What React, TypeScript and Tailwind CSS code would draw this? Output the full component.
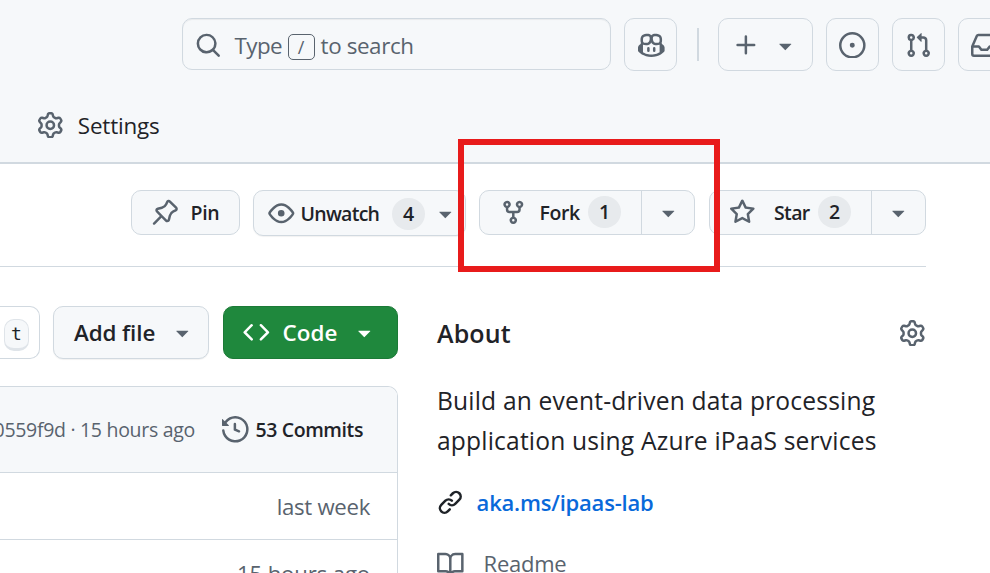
import type { ReactNode } from "react";

const icons = {
  search: "M10.68 11.74a6 6 0 0 1-7.922-8.982 6 6 0 0 1 8.982 7.922l3.04 3.04a.749.749 0 0 1-.326 1.275.749.749 0 0 1-.734-.215ZM11.5 7a4.499 4.499 0 1 0-8.997 0A4.499 4.499 0 0 0 11.5 7Z",
  copilot: "M7.998 15.035c-4.562 0-7.873-2.914-7.998-3.749V9.338c.085-.628.677-1.686 1.588-2.065.013-.07.024-.143.036-.218.029-.183.06-.384.126-.612-.201-.508-.254-1.084-.254-1.656 0-.87.128-1.769.693-2.484.579-.733 1.494-1.124 2.724-1.261 1.206-.134 2.262.034 2.944.765.05.053.096.108.139.165.044-.057.094-.112.143-.165.682-.731 1.738-.899 2.944-.765 1.23.137 2.145.528 2.724 1.261.566.715.693 1.614.693 2.484 0 .572-.053 1.148-.254 1.656.066.228.098.429.126.612.012.076.024.148.037.218.924.385 1.522 1.471 1.591 2.095v1.872c0 .766-3.351 3.795-8.002 3.795Zm0-1.485c2.28 0 4.584-1.11 5.002-1.433V7.862l-.023-.116c-.49.21-1.075.291-1.727.291-1.146 0-2.059-.327-2.71-.991A3.222 3.222 0 0 1 8 6.303a3.24 3.24 0 0 1-.544.743c-.65.664-1.563.991-2.71.991-.652 0-1.236-.081-1.727-.291l-.023.116v4.255c.419.323 2.722 1.433 5.002 1.433ZM6.762 2.83c-.193-.206-.637-.413-1.682-.297-1.019.113-1.479.404-1.713.7-.247.312-.369.789-.369 1.554 0 .793.129 1.171.308 1.371.162.181.519.379 1.442.379.853 0 1.339-.235 1.638-.54.315-.322.527-.827.617-1.553.117-.935-.037-1.395-.241-1.614Zm4.155-.297c-1.044-.116-1.488.091-1.681.297-.204.219-.359.679-.242 1.614.091.726.303 1.231.618 1.553.299.305.784.54 1.638.54.922 0 1.28-.198 1.442-.379.179-.2.308-.578.308-1.371 0-.765-.123-1.242-.37-1.554-.233-.296-.693-.587-1.713-.7ZM6.25 9.037a.75.75 0 0 1 .75.75v1.501a.75.75 0 0 1-1.5 0V9.787a.75.75 0 0 1 .75-.75Zm4.25.75v1.501a.75.75 0 0 1-1.5 0V9.787a.75.75 0 0 1 1.5 0Z",
  plus: "M7.75 2a.75.75 0 0 1 .75.75V7h4.25a.75.75 0 0 1 0 1.5H8.5v4.25a.75.75 0 0 1-1.5 0V8.5H2.75a.75.75 0 0 1 0-1.5H7V2.75A.75.75 0 0 1 7.75 2Z",
  caret: "m4.427 7.427 3.396 3.396a.25.25 0 0 0 .354 0l3.396-3.396A.25.25 0 0 0 11.396 7H4.604a.25.25 0 0 0-.177.427Z",
  issue: "M8 9.5a1.5 1.5 0 1 0 0-3 1.5 1.5 0 0 0 0 3ZM8 0a8 8 0 1 1 0 16A8 8 0 0 1 8 0ZM1.5 8a6.5 6.5 0 1 0 13 0 6.5 6.5 0 0 0-13 0Z",
  pull: "M1.5 3.25a2.25 2.25 0 1 1 3 2.122v5.256a2.251 2.251 0 1 1-1.5 0V5.372A2.25 2.25 0 0 1 1.5 3.25Zm5.677-.177L9.573.677A.25.25 0 0 1 10 .854V2.5h1A2.5 2.5 0 0 1 13.5 5v5.628a2.251 2.251 0 1 1-1.5 0V5a1 1 0 0 0-1-1h-1v1.646a.25.25 0 0 1-.427.177L7.177 3.427a.25.25 0 0 1 0-.354ZM3.75 2.5a.75.75 0 1 0 0 1.5.75.75 0 0 0 0-1.5Zm0 9.5a.75.75 0 1 0 0 1.5.75.75 0 0 0 0-1.5Zm8.25.75a.75.75 0 1 0 1.5 0 .75.75 0 0 0-1.5 0Z",
  inbox: "M2.8 2.06A1.75 1.75 0 0 1 4.41 1h7.18c.7 0 1.333.417 1.61 1.06l2.74 6.395c.04.093.06.194.06.295v4.5A1.75 1.75 0 0 1 14.25 15H1.75A1.75 1.75 0 0 1 0 13.25v-4.5c0-.101.02-.202.06-.295Zm1.61.44a.25.25 0 0 0-.23.152L1.887 8H4.75a.75.75 0 0 1 .6.3L6.625 10h2.75l1.275-1.7a.75.75 0 0 1 .6-.3h2.863L11.82 2.652a.25.25 0 0 0-.23-.152Zm10.09 7h-2.875l-1.275 1.7a.75.75 0 0 1-.6.3h-3.5a.75.75 0 0 1-.6-.3L4.375 9.5H1.5v3.75c0 .138.112.25.25.25h12.5a.25.25 0 0 0 .25-.25Z",
  gear: "M8 0a8.2 8.2 0 0 1 .701.031C9.444.095 9.99.645 10.16 1.29l.288 1.107c.018.066.079.158.212.224.231.114.454.243.668.386.123.082.233.09.299.071l1.103-.303c.644-.176 1.392.021 1.82.63.27.385.506.792.704 1.218.315.675.111 1.422-.364 1.891l-.814.806c-.049.048-.098.147-.088.294.016.257.016.515 0 .772-.01.147.038.246.088.294l.814.806c.475.469.679 1.216.364 1.891a7.977 7.977 0 0 1-.704 1.217c-.428.61-1.176.807-1.82.63l-1.102-.302c-.067-.019-.177-.011-.3.071a5.909 5.909 0 0 1-.668.386c-.133.066-.194.158-.211.224l-.29 1.106c-.168.646-.715 1.196-1.458 1.26a8.006 8.006 0 0 1-1.402 0c-.743-.064-1.289-.614-1.458-1.26l-.289-1.106c-.018-.066-.079-.158-.212-.224a5.738 5.738 0 0 1-.668-.386c-.123-.082-.233-.09-.299-.071l-1.103.303c-.644.176-1.392-.021-1.82-.63a8.12 8.12 0 0 1-.704-1.218c-.315-.675-.111-1.422.363-1.891l.815-.806c.05-.048.098-.147.088-.294a6.214 6.214 0 0 1 0-.772c.01-.147-.038-.246-.088-.294l-.815-.806C.635 6.045.431 5.298.746 4.623a7.92 7.92 0 0 1 .704-1.217c.428-.61 1.176-.807 1.82-.63l1.102.302c.067.019.177.011.3-.071.214-.143.437-.272.668-.386.133-.066.194-.158.211-.224l.29-1.106C6.009.645 6.556.095 7.299.03 7.53.01 7.764 0 8 0Zm-.571 1.525c-.036.003-.108.036-.137.146l-.289 1.105c-.147.561-.549.967-.998 1.189-.173.086-.34.183-.5.29-.417.278-.97.423-1.529.27l-1.103-.303c-.109-.03-.175.016-.195.045-.22.312-.412.644-.573.99-.014.031-.021.11.059.19l.815.806c.411.406.562.957.53 1.456a4.709 4.709 0 0 0 0 .582c.032.499-.119 1.05-.53 1.456l-.815.806c-.081.08-.073.159-.059.19.162.346.353.677.573.989.02.03.085.076.195.046l1.102-.303c.56-.153 1.113-.008 1.53.27.161.107.328.204.501.29.447.222.85.629.997 1.189l.289 1.105c.029.109.101.143.137.146a6.6 6.6 0 0 0 1.142 0c.036-.003.108-.036.137-.146l.289-1.105c.147-.561.549-.967.998-1.189.173-.086.34-.183.5-.29.417-.278.97-.423 1.529-.27l1.103.303c.109.029.175-.016.195-.045.22-.313.411-.644.573-.99.014-.031.021-.11-.059-.19l-.815-.806c-.411-.406-.562-.957-.53-1.456a4.709 4.709 0 0 0 0-.582c-.032-.499.119-1.05.53-1.456l.815-.806c.081-.08.073-.159.059-.19a6.464 6.464 0 0 0-.573-.989c-.02-.03-.085-.076-.195-.046l-1.102.303c-.56.153-1.113.008-1.53-.27a4.44 4.44 0 0 0-.501-.29c-.447-.222-.85-.629-.997-1.189l-.289-1.105c-.029-.11-.101-.143-.137-.146a6.6 6.6 0 0 0-1.142 0ZM11 8a3 3 0 1 1-6 0 3 3 0 0 1 6 0ZM9.5 8a1.5 1.5 0 1 0-3.001.001A1.5 1.5 0 0 0 9.5 8Z",
  pin: "m11.294.984 3.722 3.722a1.75 1.75 0 0 1-.504 2.826l-1.327.613a3.089 3.089 0 0 0-1.707 2.084l-.584 2.454c-.317 1.332-1.972 1.8-2.94.832L5.75 11.311 1.78 15.28a.749.749 0 1 1-1.06-1.06l3.969-3.97-2.204-2.204c-.968-.968-.5-2.623.832-2.94l2.454-.584a3.08 3.08 0 0 0 2.084-1.707l.613-1.327a1.75 1.75 0 0 1 2.826-.504ZM6.283 9.723l2.732 2.731a.25.25 0 0 0 .42-.119l.584-2.454a4.586 4.586 0 0 1 2.537-3.098l1.328-.613a.25.25 0 0 0 .072-.404l-3.722-3.722a.25.25 0 0 0-.404.072l-.613 1.328a4.584 4.584 0 0 1-3.098 2.537l-2.454.584a.25.25 0 0 0-.119.42l2.731 2.732Z",
  eye: "M8 2c1.981 0 3.671.992 4.933 2.078 1.27 1.091 2.187 2.345 2.637 3.023a1.62 1.62 0 0 1 0 1.798c-.45.678-1.367 1.932-2.637 3.023C11.67 13.008 9.981 14 8 14c-1.981 0-3.671-.992-4.933-2.078C1.797 10.83.88 9.576.43 8.898a1.62 1.62 0 0 1 0-1.798c.45-.677 1.367-1.931 2.637-3.022C4.33 2.992 6.019 2 8 2ZM1.679 7.932a.12.12 0 0 0 0 .136c.411.622 1.241 1.75 2.366 2.717C5.176 11.758 6.527 12.5 8 12.5c1.473 0 2.825-.742 3.955-1.715 1.124-.967 1.954-2.096 2.366-2.717a.12.12 0 0 0 0-.136c-.412-.621-1.242-1.75-2.366-2.717C10.824 4.242 9.473 3.5 8 3.5c-1.473 0-2.825.742-3.955 1.715-1.124.967-1.954 2.096-2.366 2.717ZM8 10a2 2 0 1 1-.001-3.999A2 2 0 0 1 8 10Z",
  fork: "M5 5.372v.878c0 .414.336.75.75.75h4.5a.75.75 0 0 0 .75-.75v-.878a2.25 2.25 0 1 1 1.5 0v.878a2.25 2.25 0 0 1-2.25 2.25h-1.5v2.128a2.251 2.251 0 1 1-1.5 0V8.5h-1.5A2.25 2.25 0 0 1 3.5 6.25v-.878a2.25 2.25 0 1 1 1.5 0ZM5 3.25a.75.75 0 1 0-1.5 0 .75.75 0 0 0 1.5 0Zm6.75.75a.75.75 0 1 0 0-1.5.75.75 0 0 0 0 1.5Zm-3 8.75a.75.75 0 1 0-1.5 0 .75.75 0 0 0 1.5 0Z",
  star: "M8 .25a.75.75 0 0 1 .673.418l1.882 3.815 4.21.612a.75.75 0 0 1 .416 1.279l-3.046 2.97.719 4.192a.751.751 0 0 1-1.088.791L8 12.347l-3.766 1.98a.75.75 0 0 1-1.088-.79l.72-4.194L.818 6.374a.75.75 0 0 1 .416-1.28l4.21-.611L7.327.668A.75.75 0 0 1 8 .25Zm0 2.445L6.615 5.5a.75.75 0 0 1-.564.41l-3.097.45 2.24 2.184a.75.75 0 0 1 .216.664l-.528 3.084 2.769-1.456a.75.75 0 0 1 .698 0l2.77 1.456-.53-3.084a.75.75 0 0 1 .216-.664l2.24-2.183-3.096-.45a.75.75 0 0 1-.564-.41L8 2.694Z",
  code: "m11.28 3.22 4.25 4.25a.75.75 0 0 1 0 1.06l-4.25 4.25a.749.749 0 0 1-1.275-.326.749.749 0 0 1 .215-.734L13.94 8l-3.72-3.72a.749.749 0 0 1 .326-1.275.749.749 0 0 1 .734.215Zm-6.56 0a.751.751 0 0 1 1.042.018.751.751 0 0 1 .018 1.042L2.06 8l3.72 3.72a.749.749 0 0 1-.326 1.275.749.749 0 0 1-.734-.215L.47 8.53a.75.75 0 0 1 0-1.06Z",
  history: "m.427 1.927 1.215 1.215a8.002 8.002 0 1 1-1.6 5.685.75.75 0 1 1 1.493-.154 6.5 6.5 0 1 0 1.18-4.458l1.358 1.358A.25.25 0 0 1 3.896 6H.25A.25.25 0 0 1 0 5.75V2.104a.25.25 0 0 1 .427-.177ZM7.75 4a.75.75 0 0 1 .75.75v2.992l2.028.812a.75.75 0 0 1-.557 1.392l-2.5-1A.751.751 0 0 1 7 8.25v-3.5A.75.75 0 0 1 7.75 4Z",
  link: "m7.775 3.275 1.25-1.25a3.5 3.5 0 1 1 4.95 4.95l-2.5 2.5a3.5 3.5 0 0 1-4.95 0 .751.751 0 0 1 .018-1.042.751.751 0 0 1 1.042-.018 1.998 1.998 0 0 0 2.83 0l2.5-2.5a2.002 2.002 0 0 0-2.83-2.83l-1.25 1.25a.751.751 0 0 1-1.042-.018.751.751 0 0 1-.018-1.042Zm-4.69 9.64a1.998 1.998 0 0 0 2.83 0l1.25-1.25a.751.751 0 0 1 1.042.018.751.751 0 0 1 .018 1.042l-1.25 1.25a3.5 3.5 0 1 1-4.95-4.95l2.5-2.5a3.5 3.5 0 0 1 4.95 0 .751.751 0 0 1-.018 1.042.751.751 0 0 1-1.042.018 1.998 1.998 0 0 0-2.83 0l-2.5 2.5a1.998 1.998 0 0 0 0 2.83Z",
  book: "M0 1.75A.75.75 0 0 1 .75 1h4.253c1.227 0 2.317.59 3 1.501A3.743 3.743 0 0 1 11.006 1h4.245a.75.75 0 0 1 .75.75v10.5a.75.75 0 0 1-.75.75h-4.507a2.25 2.25 0 0 0-1.591.659l-.622.621a.75.75 0 0 1-1.06 0l-.622-.621A2.25 2.25 0 0 0 5.258 13H.75a.75.75 0 0 1-.75-.75Zm7.251 10.324.004-5.073-.002-2.253A2.25 2.25 0 0 0 5.003 2.5H1.5v9h3.757a3.75 3.75 0 0 1 1.994.574ZM8.755 4.75l-.004 7.322a3.752 3.752 0 0 1 1.992-.572H14.5v-9h-3.495a2.25 2.25 0 0 0-2.25 2.25Z",
};

function Icon({ name, className = "" }: { name: keyof typeof icons; className?: string }) {
  return (
    <svg viewBox="0 0 16 16" fill="currentColor" className={`size-[26.6px] shrink-0 ${className}`}>
      <path d={icons[name]} />
    </svg>
  );
}

function HeaderButton({ className = "", children }: { className?: string; children: ReactNode }) {
  return (
    <button className={`flex h-[53px] shrink-0 items-center rounded-[10px] border border-[#d1d9e0] pt-px ${className}`}>
      {children}
    </button>
  );
}

function Counter({ className = "", children }: { className?: string; children: ReactNode }) {
  return (
    <span className={`flex h-8 w-[33px] shrink-0 items-center justify-center rounded-full bg-[#e7eaed] text-[19.5px] leading-none ${className}`}>
      {children}
    </span>
  );
}

type SplitButtonProps = {
  icon: "fork" | "star";
  label: string;
  count: number;
  className: string;
  mainClass: string;
  labelClass: string;
  menuClass: string;
};

function SplitButton({ icon, label, count, className, mainClass, labelClass, menuClass }: SplitButtonProps) {
  return (
    <div className={`flex h-[45px] shrink-0 rounded-[10px] border border-[#d1d9e0] bg-[#f6f8fa] ${className}`}>
      <button className={`flex flex-1 items-start border-r border-[#d1d9e0] ${mainClass}`}>
        <Icon name={icon} className="mt-2 text-[#59636e]" />
        <span className={`mt-[11px] shrink-0 text-left leading-[22px] ${labelClass}`}>{label}</span>
        <Counter className="mt-[5px]">{count}</Counter>
      </button>
      <button className={`flex items-start pl-[13px] ${menuClass}`}>
        <Icon name="caret" className="mt-2 text-[#59636e]" />
      </button>
    </div>
  );
}

export default function App() {
  return (
    <div className="relative h-[573px] w-[990px] overflow-hidden bg-white font-['Open_Sans','Noto_Sans',sans-serif] text-[#1f2328]">
      <header className="h-[164px] border-b-2 border-[#d1d9e0] bg-[#f6f8fa]">
        <div className="flex pt-[18px] pl-[182px] text-[#59636e]">
          <div className="flex h-[52px] w-[429px] shrink-0 items-center rounded-[10px] border border-[#d1d9e0] pl-3 shadow-[inset_0_1px_1px_rgba(31,35,40,0.06)]">
            <Icon name="search" className="mt-[3px]" />
            <span className="mt-1 ml-[13px] w-[53px] text-[22.4px] tracking-[-0.6px]">Type</span>
            <kbd className="mt-[5px] flex h-[26px] w-[27px] items-center justify-center rounded-[5px] border border-[#59636e] font-['Open_Sans','Noto_Sans',sans-serif] text-[18px] leading-none">/</kbd>
            <span className="mt-1 ml-[6px] text-[22.4px] tracking-[-0.4px]">to search</span>
          </div>
          <HeaderButton className="ml-[13px] w-[53px] pl-[13px]"><Icon name="copilot" /></HeaderButton>
          <div className="mt-[10px] ml-5 h-[33px] w-[2px] shrink-0 bg-[#d1d9e0]" />
          <HeaderButton className="ml-[19px] w-[95px] pl-[14px]">
            <Icon name="plus" />
            <Icon name="caret" className="mt-px ml-3" />
          </HeaderButton>
          <HeaderButton className="ml-[13px] w-[53px] pl-3"><Icon name="issue" /></HeaderButton>
          <HeaderButton className="ml-[13px] w-[53px] pl-3"><Icon name="pull" /></HeaderButton>
          <HeaderButton className="ml-[13px] w-[53px] pl-3"><Icon name="inbox" /></HeaderButton>
        </div>
        <div className="mt-10 flex items-center pl-[36.7px]">
          <Icon name="gear" className="text-[#59636e]" />
          <span className="mt-[2px] ml-[14.5px] text-[22.4px] leading-[26px] tracking-[-0.15px]">Settings</span>
        </div>
      </header>

      <div className="flex h-[103px] w-[926px] border-b border-[#d1d9e0] pt-[26px] pl-[131px] text-[19.5px] font-semibold">
        <button className="flex h-[45px] w-[109px] shrink-0 items-start rounded-[10px] border border-[#d1d9e0] bg-[#f6f8fa] pl-[20px]">
          <Icon name="pin" className="mt-2 text-[#59636e]" />
          <span className="mt-[11px] ml-3 leading-[22px] tracking-[-0.4px]">Pin</span>
        </button>
        <button className="ml-[13px] flex h-[46px] w-[213px] shrink-0 items-start rounded-[10px] border border-[#d1d9e0] bg-[#f6f8fa] pl-[14px] shadow-[0_1px_1px_rgba(31,35,40,0.06)]">
          <Icon name="eye" className="mt-[9px] text-[#59636e]" />
          <span className="mt-3 ml-[6px] w-[91.4px] text-left leading-[22px] tracking-[-0.75px]">Unwatch</span>
          <Counter className="mt-[7px]">4</Counter>
          <Icon name="caret" className="mt-[9px] ml-[7px] text-[#59636e]" />
        </button>
        <SplitButton icon="fork" label="Fork" count={1} className="ml-[13px] w-[216px]" mainClass="pl-[19.5px]" labelClass="ml-[13.4px] w-[48.5px] tracking-[-0.4px]" menuClass="w-[52px]" />
        <SplitButton icon="star" label="Star" count={2} className="ml-[14px] w-[217px]" mainClass="pl-[18.5px]" labelClass="ml-[19px] w-[44px] tracking-[-0.7px]" menuClass="w-[53px]" />
      </div>

      <div className="flex">
        <main className="w-[398px] shrink-0">
          <div className="flex pt-[39px]">
            <div className="flex h-[53px] w-10 justify-end rounded-r-[10px] border border-l-0 border-[#d1d9e0] pt-3 pr-[10px]">
              <kbd className="flex h-8 w-[25px] items-center justify-center rounded-[10px] border border-b-[3px] border-[#dfe4e9] bg-[#f6f8fa] font-['DejaVu_Sans_Mono',monospace] text-[18px] leading-none">t</kbd>
            </div>
            <button className="ml-[13px] flex h-[53px] w-[156px] items-center rounded-[10px] border border-[#d1d9e0] bg-[#f6f8fa] pl-5 text-[22.4px] font-semibold shadow-[0_1px_1px_rgba(31,35,40,0.06)]">
              <span className="w-[95px] text-left tracking-[-0.1px]">Add file</span>
              <Icon name="caret" className="text-[#59636e]" />
            </button>
            <button className="ml-[14px] flex h-[53px] w-[175px] items-center rounded-[10px] border border-[#1c7a37] bg-[#1f883d] pl-[19px] text-[22.4px] font-semibold text-white">
              <Icon name="code" />
              <span className="ml-[13px] w-[68px] text-left">Code</span>
              <Icon name="caret" />
            </button>
          </div>
          <div className="mt-[27px] h-[200px] overflow-hidden rounded-tr-[10px] border-t border-r border-[#d1d9e0]">
            <div className="flex h-[86px] items-center justify-end border-b border-[#d1d9e0] bg-[#f6f8fa] pr-[34px] text-[19.5px] whitespace-nowrap">
              <span className="mr-[27px] tracking-[-0.3px] text-[#59636e]">0559f9d · 15 hours ago</span>
              <Icon name="history" className="text-[#59636e]" />
              <span className="ml-[7px] font-semibold tracking-[-0.4px]">53 Commits</span>
            </div>
            <div className="flex h-[67px] items-center justify-end border-b border-[#d1d9e0] pt-[2px] pr-[27px] text-[22.2px] tracking-[-0.3px] text-[#59636e]">last week</div>
            <div className="flex h-[67px] items-center justify-end pt-px pr-[27px] text-[22.2px] tracking-[-0.15px] text-[#59636e]">15 hours ago</div>
          </div>
        </main>
        <aside className="ml-10 w-[488px] shrink-0">
          <div className="mt-[49px] flex h-[34px] items-center justify-between">
            <h2 className="mt-[2px] -ml-px text-[25px] font-semibold tracking-[0.1px]">About</h2>
            <Icon name="gear" className="text-[#59636e]" />
          </div>
          <p className="mt-[31px] -ml-px text-[24.6px] leading-10 tracking-[0.18px] whitespace-nowrap">
            Build an event-driven data processing<br />application using Azure iPaaS services
          </p>
          <div className="mt-[24px] flex h-[34px] items-center">
            <Icon name="link" className="-ml-[1px]" />
            <span className="ml-[13px] text-[22px] font-semibold tracking-[-0.2px] text-[#0969da]">aka.ms/ipaas-lab</span>
          </div>
          <div className="mt-[27px] flex h-[34px] items-center text-[#59636e]">
            <Icon name="book" className="mt-[2px] -ml-[1px]" />
            <span className="ml-5 text-[22px] tracking-[-0.25px]">Readme</span>
          </div>
        </aside>
      </div>

      <div className="pointer-events-none absolute top-[139px] left-[458px] h-[133px] w-[262px] border-[6px] border-[#e81b1b]" />
    </div>
  );
}
